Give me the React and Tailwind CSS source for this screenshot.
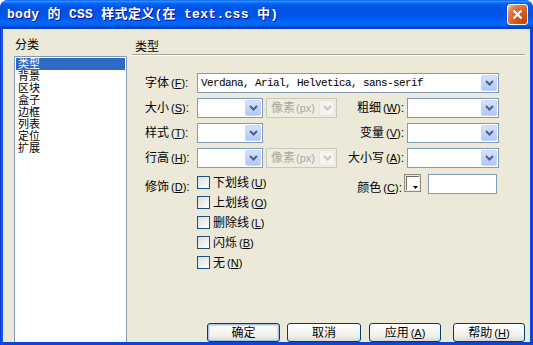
import React from "react";

const Chevron = ({ color = "#4D6185" }) => (
  <svg width="9" height="6" viewBox="0 0 9 6">
    <path d="M1 1 L4.5 4.5 L8 1" stroke={color} strokeWidth="2" fill="none" />
  </svg>
);

function Label({ text, k }) {
  return (
    <span className="whitespace-nowrap leading-[12px] text-black">
      {text}
      <span className="ml-[2px] text-[11px]">
        (<span className="underline">{k}</span>)
      </span>
      :
    </span>
  );
}

function Select({ w, children, disabled }) {
  return (
    <div
      className={`${w} h-[20px] flex items-stretch p-[1px] border ${
        disabled ? "border-[#CAC8BB] bg-[#EEEDE3]" : "border-[#7F9DB9] bg-white"
      }`}
    >
      <div className="flex-1 flex items-center px-[2px] overflow-hidden whitespace-nowrap">{children}</div>
      <div
        className={`w-[16px] flex items-center justify-center rounded-[2px] border ${
          disabled
            ? "border-[#E6E4DB] bg-[#F4F3EE]"
            : "border-[#C6D6FC] bg-[linear-gradient(to_bottom,#D6E2FD,#B2C7F7)]"
        }`}
      >
        <Chevron color={disabled ? "#C9C7BA" : "#4D6185"} />
      </div>
    </div>
  );
}

function Check({ text, k }) {
  return (
    <div className="flex items-center h-[13px]">
      <div className="w-[13px] h-[13px] border border-[#1C5180] bg-[linear-gradient(135deg,#DCDCD7,#FFFFFF)]" />
      <span className="ml-[3px] leading-[12px] whitespace-nowrap">
        {text}
        <span className="ml-[2px] text-[11px]">
          (<span className="underline">{k}</span>)
        </span>
      </span>
    </div>
  );
}

function Btn({ children, cls, isDefault }) {
  return (
    <button
      className={`${cls} h-[19px] rounded-[3px] border border-[#003C74] bg-[linear-gradient(to_bottom,#FFFFFF,#F1F0EA_70%,#DCD8CC)] text-[12px] leading-[12px] text-black flex items-center justify-center ${
        isDefault ? "shadow-[inset_0_0_0_1px_#A6C2EE,inset_0_0_0_2px_#CEE0F9]" : ""
      }`}
    >
      {children}
    </button>
  );
}

const cats = ["类型", "背景", "区块", "盒子", "边框", "列表", "定位", "扩展"];

export default function App() {
  return (
    <div className="w-[533px] h-[345px] bg-white font-['Liberation_Sans','Noto_Sans_CJK_SC',sans-serif] text-[12px] text-black">
      <div className="h-full flex flex-col rounded-t-[8px] overflow-hidden bg-[#0A46D8]">
        {/* title bar */}
        <div className="h-[29px] shrink-0 flex items-center pl-[7px] pr-[5px] bg-[linear-gradient(to_bottom,#0058EE_0%,#3593FF_4%,#288EFF_6%,#127DFF_8%,#036FFC_10%,#0262EE_14%,#0057E5_20%,#0054E3_24%,#0055EB_56%,#005BF5_66%,#026AFE_76%,#0062EF_86%,#0052D6_92%,#0040AB_94%,#0a3ed6_100%)]">
          <span className="font-['Liberation_Mono','Noto_Sans_CJK_SC',monospace] text-[13px] tracking-[0.3px] font-bold text-white [text-shadow:1px_1px_#0F1089] whitespace-nowrap">
            body 的 CSS 样式定义(在 text.css 中)
          </span>
          <div className="ml-auto w-[21px] h-[21px] rounded-[3px] border border-white bg-[radial-gradient(circle_at_85%_85%,#C84200_0%,#DC6527_55%,#E08060_75%,#F8C0A8_95%)] flex items-center justify-center">
            <svg width="11" height="11" viewBox="0 0 11 11">
              <path d="M1.5 1.5 L9.5 9.5 M9.5 1.5 L1.5 9.5" stroke="white" strokeWidth="2.2" />
            </svg>
          </div>
        </div>

        {/* client */}
        <div className="flex-1 flex pl-[3px] pr-[4px] pb-[3px] bg-[linear-gradient(to_right,#0831D9,#1560EC_2px,#0A46D8_4px)]">
          <div className="flex-1 flex bg-[#ECE9D8]">
            {/* left */}
            <div className="ml-[11px] w-[113px] flex flex-col">
              <div className="mt-[10px] pl-[1px] leading-[12px]">分类</div>
              <div className="mt-[5px] flex-1 border border-b-0 border-[#7F9DB9] bg-white p-[1px]">
                {cats.map((c, i) => (
                  <div
                    key={c}
                    className={`h-[12px] text-[11px] leading-[12px] pl-[2px] overflow-hidden ${
                      i === 0 ? "bg-[#316AC5] text-white" : ""
                    }`}
                  >
                    {c}
                  </div>
                ))}
              </div>
            </div>

            {/* right */}
            <div className="ml-[5px] mr-[5px] flex-1 flex flex-col">
              <div className="mt-[12px] pl-[3px] leading-[12px]">类型</div>
              <div className="mt-[1px] h-[1px] bg-[#ACA899]" />
              <div className="h-[1px] bg-white" />

              <div className="mt-[17px] pl-[13px] w-[367px] flex flex-col gap-[5px]">
                <div className="flex items-center">
                  <div className="w-[52px]">
                    <Label text="字体" k="F" />
                  </div>
                  <Select w="w-[302px]">
                    <span className="font-['Liberation_Mono',monospace] text-[11px] tracking-[-0.6px]">
                      Verdana, Arial, Helvetica, sans-serif
                    </span>
                  </Select>
                </div>

                <div className="flex items-center">
                  <div className="w-[52px]">
                    <Label text="大小" k="S" />
                  </div>
                  <Select w="w-[66px]" />
                  <div className="ml-[3px]">
                    <Select w="w-[71px]" disabled>
                      <span className="text-[#ACA899] pl-[1px]">
                        像素<span className="ml-[1px] text-[11px]">(px)</span>
                      </span>
                    </Select>
                  </div>
                  <div className="flex-1 flex justify-end">
                    <Label text="粗细" k="W" />
                  </div>
                  <div className="ml-[3px]">
                    <Select w="w-[92px]" />
                  </div>
                </div>

                <div className="flex items-center">
                  <div className="w-[52px]">
                    <Label text="样式" k="T" />
                  </div>
                  <Select w="w-[66px]" />
                  <div className="flex-1 flex justify-end">
                    <Label text="变量" k="V" />
                  </div>
                  <div className="ml-[3px]">
                    <Select w="w-[92px]" />
                  </div>
                </div>

                <div className="flex items-center">
                  <div className="w-[52px]">
                    <Label text="行高" k="H" />
                  </div>
                  <Select w="w-[66px]" />
                  <div className="ml-[3px]">
                    <Select w="w-[71px]" disabled>
                      <span className="text-[#ACA899] pl-[1px]">
                        像素<span className="ml-[1px] text-[11px]">(px)</span>
                      </span>
                    </Select>
                  </div>
                  <div className="flex-1 flex justify-end">
                    <Label text="大小写" k="A" />
                  </div>
                  <div className="ml-[3px]">
                    <Select w="w-[92px]" />
                  </div>
                </div>

                <div className="flex items-start">
                  <div className="w-[52px] pt-[5px]">
                    <Label text="修饰" k="D" />
                  </div>
                  <div className="pt-[3px] flex flex-col gap-[7px]">
                    <Check text="下划线" k="U" />
                    <Check text="上划线" k="O" />
                    <Check text="删除线" k="L" />
                    <Check text="闪烁" k="B" />
                    <Check text="无" k="N" />
                  </div>
                  <div className="flex-1 flex justify-end items-start pt-[1px] pr-[2px]">
                    <div className="pt-[5px]">
                      <Label text="颜色" k="C" />
                    </div>
                    <div className="ml-[2px] w-[17px] h-[18px] border border-[#8D8A7D] bg-[#ECE9D8] p-[1px] flex">
                      <div className="relative flex-1 border-t border-l border-[#716F64] bg-white">
                        <svg className="absolute right-[1px] bottom-[1px]" width="5" height="3" viewBox="0 0 5 3">
                          <path d="M0 0 H5 L2.5 3 Z" fill="black" />
                        </svg>
                      </div>
                    </div>
                    <div className="ml-[7px] w-[69px] h-[20px] border border-[#7F9DB9] bg-white" />
                  </div>
                </div>
              </div>

              <div className="mt-auto pl-[75px] flex">
                <Btn cls="w-[73px]" isDefault>确定</Btn>
                <Btn cls="ml-[7px] w-[74px]">取消</Btn>
                <Btn cls="ml-[8px] w-[72px]">
                  应用<span className="ml-[2px] text-[11px]">(<span className="underline">A</span>)</span>
                </Btn>
                <Btn cls="ml-[12px] w-[72px]">
                  帮助<span className="ml-[2px] text-[11px]">(<span className="underline">H</span>)</span>
                </Btn>
              </div>
            </div>
          </div>
        </div>
      </div>
    </div>
  );
}
